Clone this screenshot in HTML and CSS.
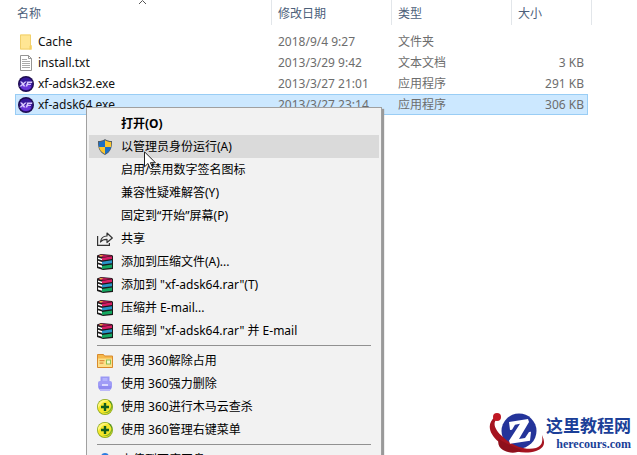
FILE: index.html
```html
<!DOCTYPE html>
<html lang="zh-CN">
<head>
    <meta charset="UTF-8">
    <meta name="viewport" content="width=device-width, initial-scale=1.0">
    <title>xf-adsk64</title>
    <link rel="stylesheet" href="styles.css">
</head>
<body>

    <!-- shared icons -->
    <svg class="defs" width="0" height="0">
        <symbol id="icon-xf" viewBox="0 0 16 16">
            <circle cx="8" cy="8" r="8" fill="#1d0c50"/>
            <circle cx="8" cy="8" r="6.6" fill="#35189a"/>
            <ellipse cx="8" cy="11" rx="5" ry="3" fill="#6a35d8"/>
            <path d="M2 5.5h2l1.2 1.6L7 5.500h1.800L6 8.200l1.500 2.300H5.600L4.700 9.200 3.200 10.500H1.300L3.900 8z" fill="#d9c8ff"/>
            <path d="M9.200 5.500h5.300l-.5 1.400h-3.500l-.3.900h3l-.5 1.300H9.800l-.5 1.400H7.700z" fill="#d9c8ff"/>
        </symbol>
        <symbol id="icon-rar" viewBox="0 0 16 16">
            <path d="M0 1.500L4 0l11 1 1 1v13l-10 1-6-2z" fill="#1a1a1a"/>
            <path d="M1 2l3.500-1.500L15 1.700 6 3.500z" fill="#b01450"/>
            <path d="M3.500 1l3 .4L4 2.500l-2-.5z" fill="#f0c040"/>
            <path d="M5 4l10-1.700v2.700L5 6.500z" fill="#d81e64"/>
            <path d="M1 3.500l4 1.200v1.500L1 5z" fill="#fff"/>
            <path d="M1 6.700l4 1.300v1.800L1 8.500z" fill="#fff"/>
            <path d="M5 7.800l10-1.600v3L5 10.600z" fill="#2894c8"/>
            <path d="M1 10.300l4 1.300v2.200l-4-1.400z" fill="#fff"/>
            <path d="M5 11.900l10-1.500v3.400L5 15z" fill="#14a860"/>
        </symbol>
        <symbol id="icon-plus" viewBox="0 0 16 16">
            <circle cx="8" cy="8" r="8" fill="#8aa81c"/>
            <circle cx="8" cy="8" r="7.200" fill="#f6e72c"/>
            <path d="M1 9C0 3 6-1 12 2 8 2 5 3 3.500 6z" fill="#fff67a"/>
            <path d="M15.200 6c1 6-5 10-11 7.500C9 14.500 13 12 14 8z" fill="#7fb32a"/>
            <path d="M11 1c3 1 4.500 4 4 7-.5-3-2-5-4-7z" fill="#3f8f2a"/>
            <path d="M6.800 4h2.400v2.800H12v2.400H9.200V12H6.800V9.200H4V6.800h2.800z" fill="#125c1c"/>
        </symbol>
    </svg>

    <main class="explorer">
        <table class="files">
            <colgroup>
                <col class="col-name">
                <col class="col-date">
                <col class="col-type">
                <col class="col-size">
                <col class="col-end">
            </colgroup>
            <thead>
                <tr>
                    <th scope="col">名称
                        <svg class="sort" width="9" height="4" viewBox="0 0 9 4"><path d="M1 4l3.500-3.500L8 4" fill="none" stroke="#555"/></svg>
                    </th>
                    <th scope="col">修改日期</th>
                    <th scope="col">类型</th>
                    <th scope="col">大小</th>
                    <td></td>
                </tr>
            </thead>
            <tbody>
                <tr>
                    <td class="name">
                        <div class="file">
                            <svg width="16" height="16" viewBox="0 0 16 16">
                                <path d="M2 .5h11v11h1v4H2z" fill="#ffe694"/>
                                <path d="M2.500 1h10v14h-10z" fill="none" stroke="#f1d06c"/>
                                <path d="M11.500 15.500v-3.500l2-1v4.500z" fill="#f3cf65"/>
                            </svg>
                            <span>Cache</span>
                        </div>
                    </td>
                    <td>2018/9/4 9:27</td>
                    <td>文件夹</td>
                    <td class="size"></td>
                    <td class="end"></td>
                </tr>
                <tr>
                    <td class="name">
                        <div class="file">
                            <svg width="16" height="16" viewBox="0 0 16 16">
                                <path d="M2.500.5h8l3 3v12h-11z" fill="#fff" stroke="#959595"/>
                                <path d="M10.500.5v3h3" fill="none" stroke="#959595"/>
                                <path d="M4 4.500h5M4 6.500h8M4 8.500h8M4 10.500h8M4 12.500h8" stroke="#aaa"/>
                            </svg>
                            <span>install.txt</span>
                        </div>
                    </td>
                    <td>2013/3/29 9:42</td>
                    <td>文本文档</td>
                    <td class="size">3 KB</td>
                    <td class="end"></td>
                </tr>
                <tr>
                    <td class="name">
                        <div class="file">
                            <svg width="16" height="16"><use href="#icon-xf"/></svg>
                            <span>xf-adsk32.exe</span>
                        </div>
                    </td>
                    <td>2013/3/27 21:01</td>
                    <td>应用程序</td>
                    <td class="size">291 KB</td>
                    <td class="end"></td>
                </tr>
                <tr class="selected">
                    <td class="name">
                        <div class="file">
                            <svg width="16" height="16"><use href="#icon-xf"/></svg>
                            <span>xf-adsk64.exe</span>
                        </div>
                    </td>
                    <td>2013/3/27 23:14</td>
                    <td>应用程序</td>
                    <td class="size">306 KB</td>
                    <td class="end"></td>
                </tr>
            </tbody>
        </table>
    </main>

    <div class="menu" role="menu">
        <button type="button" role="menuitem" class="item default"><span class="icon"></span>打开(O)</button>
        <button type="button" role="menuitem" class="item active">
            <span class="icon">
                <svg width="16" height="16" viewBox="0 0 16 16">
                    <path d="M8 0c2 1.500 4 2 7 2 .3 6-1 11-7 14C2 13 .7 8 1 2c3 0 5-.5 7-2z" fill="#555f68"/>
                    <path d="M8 1.200V8H2C1.800 6 1.800 4.500 1.900 3 4.500 2.900 6.300 2.300 8 1.200z" fill="#1c6fc4"/>
                    <path d="M8 1.200c1.700 1.100 3.500 1.700 6.100 1.800.1 1.500.1 3-.1 5H8z" fill="#fbc62c"/>
                    <path d="M2 8h6v6.900C4.500 13.200 2.600 11 2 8z" fill="#fbc62c"/>
                    <path d="M14 8H8v6.900c3.500-1.700 5.400-3.900 6-6.900z" fill="#1c6fc4"/>
                </svg>
            </span>以管理员身份运行(A)
        </button>
        <button type="button" role="menuitem" class="item"><span class="icon"></span>启用/禁用数字签名图标</button>
        <button type="button" role="menuitem" class="item"><span class="icon"></span>兼容性疑难解答(Y)</button>
        <button type="button" role="menuitem" class="item"><span class="icon"></span>固定到“开始”屏幕(P)</button>
        <button type="button" role="menuitem" class="item">
            <span class="icon">
                <svg width="16" height="16" viewBox="0 0 16 16" fill="none" stroke="#333" stroke-width="1.200">
                    <path d="M.6 5v9.400h11.800V12"/>
                    <path d="M3.500 11C4 7 6.500 5 10 5V2l5.300 5L10 11.500V8.300C7 8.200 5 9 3.500 11z" stroke-linejoin="round"/>
                </svg>
            </span>共享
        </button>
        <button type="button" role="menuitem" class="item"><span class="icon"><svg width="16" height="16"><use href="#icon-rar"/></svg></span>添加到压缩文件(A)...</button>
        <button type="button" role="menuitem" class="item"><span class="icon"><svg width="16" height="16"><use href="#icon-rar"/></svg></span>添加到 "xf-adsk64.rar"(T)</button>
        <button type="button" role="menuitem" class="item"><span class="icon"><svg width="16" height="16"><use href="#icon-rar"/></svg></span>压缩并 E-mail...</button>
        <button type="button" role="menuitem" class="item"><span class="icon"><svg width="16" height="16"><use href="#icon-rar"/></svg></span>压缩到 "xf-adsk64.rar" 并 E-mail</button>
        <hr>
        <button type="button" role="menuitem" class="item">
            <span class="icon">
                <svg width="16" height="16" viewBox="0 0 16 16">
                    <path d="M.5 1.500h6l1 1.500h8v11.500H.5z" fill="#f5b84c" stroke="#d98a2c"/>
                    <path d="M1 5.500h14v8.500H1z" fill="#fde08a"/>
                    <path d="M2.500 7h5v1.200h-5zM2.500 9.500h4v1.200h-4z" fill="#e08c3c"/>
                    <path d="M9 6.500h5v5H9z" fill="#8cc152"/>
                    <path d="M10 7.500h3v3h-3z" fill="#f4f8d0"/>
                </svg>
            </span>使用 360解除占用
        </button>
        <button type="button" role="menuitem" class="item">
            <span class="icon">
                <svg width="16" height="16" viewBox="0 0 16 16">
                    <path d="M3.500 .5h9V7h-9z" fill="#9a98f4"/>
                    <path d="M5.500 2h5v4h-5z" fill="#b4b2fc"/>
                    <rect x="1" y="5" width="14" height="8" rx="2" fill="#a09cf6"/>
                    <path d="M2 10h12v3l-1 1H3l-1-1z" fill="#8f8af0"/>
                    <path d="M5 8h6v2H5z" fill="#dcdaff"/>
                    <path d="M3 13h10v2H3z" fill="#bcb8f8"/>
                </svg>
            </span>使用 360强力删除
        </button>
        <button type="button" role="menuitem" class="item"><span class="icon"><svg width="16" height="16"><use href="#icon-plus"/></svg></span>使用 360进行木马云查杀</button>
        <button type="button" role="menuitem" class="item"><span class="icon"><svg width="16" height="16"><use href="#icon-plus"/></svg></span>使用 360管理右键菜单</button>
        <hr>
        <button type="button" role="menuitem" class="item">
            <span class="icon">
                <svg width="16" height="16" viewBox="0 0 16 16">
                    <circle cx="8" cy="5" r="4" fill="#2b7de0"/>
                    <circle cx="4.500" cy="10.500" r="4" fill="#2b7de0"/>
                    <circle cx="11.500" cy="10.500" r="4" fill="#2b7de0"/>
                </svg>
            </span>上传到百度网盘
        </button>
    </div>

    <svg class="cursor" width="13" height="20" viewBox="0 0 13 20">
        <path d="M.5.800v15l3.500-3.300 2.300 5.500 2.400-1-2.300-5.300h5z" fill="#fff" stroke="#222"/>
    </svg>

    <a class="brand" href="#">
        <svg width="58" height="42" viewBox="0 0 58 42">
            <circle cx="31" cy="19" r="17.500" fill="#24349a"/>
            <path d="M7 5C-1 11 0 21 11 30c10 9 24 13 37 9 8-3 10-7 6-16 1 7 0 11-6 13-11 3-25-3-33-11C7 18 4 11 9 7z" fill="#a51420"/>
            <path d="M11 27c7 5 15 8 23 11-6 4-14 3-19 0-4-2-6-7-4-11z" fill="#8e101c"/>
            <circle cx="9" cy="5" r="4" fill="#c01824"/>
            <path d="M21 10l19-3 1 3-10 17 6-1 4-6 2-.3-1 9-20 3-1-3 11-17-5 1-3 5-2 .4z" fill="#fff"/>
        </svg>
        <span class="brand-text">
            <span class="brand-name">这里教程网</span>
            <span class="brand-url">herecours.com</span>
        </span>
    </a>

</body>
</html>
```
FILE: styles.css
```css
body {
    margin: 0;
    height: 100vh;
    overflow: hidden;
    position: relative;
    background: #fff;
    color: #000;
    font-family: "Noto Sans", "Noto Sans CJK SC", sans-serif;
    font-size: 12px;
}
.defs {
    position: absolute;
}
.explorer {
    padding-left: 15px;
}
.files {
    table-layout: fixed;
    width: 577px;
    border-collapse: separate;
    border-spacing: 0;
}
.col-name {
    width: 256px;
}
.col-date, .col-type {
    width: 120px;
}
.col-size {
    width: 77px;
}
.files th, .files td {
    padding: 0 0 0 7px;
    text-align: left;
    font-weight: normal;
    white-space: nowrap;
}
.files thead th {
    position: relative;
    height: 25px;
    padding-left: 6px;
    color: #4c607a;
}
.files thead th:first-child {
    padding-left: 2px;
}
.files thead th + th {
    border-left: 1px solid #e2e6ea;
}
.files thead td {
    border-right: 1px solid #e2e6ea;
}
.sort {
    position: absolute;
    top: 0;
    left: 50%;
    margin-left: -5px;
}
.files tbody td {
    height: 19px;
    border: 1px solid transparent;
    border-width: 1px 0;
    line-height: 19px;
    color: #6d6d6d;
}
.files tbody::before {
    content: "";
    display: table-row;
    height: 6px;
}
.files tbody .name {
    padding-left: 3px;
    color: #111;
}
.files tbody .size {
    padding: 0 4px 0 0;
    text-align: right;
}
.files tbody .selected td {
    background: #cce8ff;
    border-color: #99cdf5;
}
.files .selected .name {
    border-left: 1px solid #99cdf5;
    padding-left: 2px;
}
.files .selected .size {
    border-right: 1px solid #99cdf5;
    padding-right: 3px;
}
.files tbody .selected .end {
    background: none;
    border-color: transparent;
}
.file {
    display: flex;
    align-items: center;
    gap: 4px;
}
.menu {
    position: absolute;
    top: 107px;
    left: 86px;
    width: 290px;
    padding: 4px 2px;
    background: #f2f2f2;
    border: 1px solid #a0a0a0;
    box-shadow: 2px 2px 1px #999;
}
.item {
    display: flex;
    align-items: center;
    width: 100%;
    height: 23px;
    padding: 0 8px;
    border: none;
    background: none;
    color: #000;
    font: inherit;
    line-height: 23px;
    text-align: left;
    white-space: nowrap;
}
.item.default {
    font-weight: bold;
}
.item.active, .item:hover {
    background: #dadada;
}
.icon {
    display: flex;
    width: 24px;
}
.menu hr {
    height: 1px;
    margin: 3px 8px;
    border: none;
    background: #919191;
}
.cursor {
    position: absolute;
    top: 151px;
    left: 144px;
}
.brand {
    position: absolute;
    right: 6px;
    bottom: 1px;
    display: flex;
    align-items: center;
    color: #1b3f98;
    text-decoration: none;
}
.brand-text {
    display: flex;
    flex-direction: column;
    align-items: flex-end;
    font-weight: bold;
}
.brand-name {
    font-family: "Noto Sans CJK SC", sans-serif;
    font-size: 17px;
    line-height: 22px;
}
.brand-url {
    font-family: "Liberation Serif", serif;
    font-size: 12px;
    line-height: 16px;
}
```
